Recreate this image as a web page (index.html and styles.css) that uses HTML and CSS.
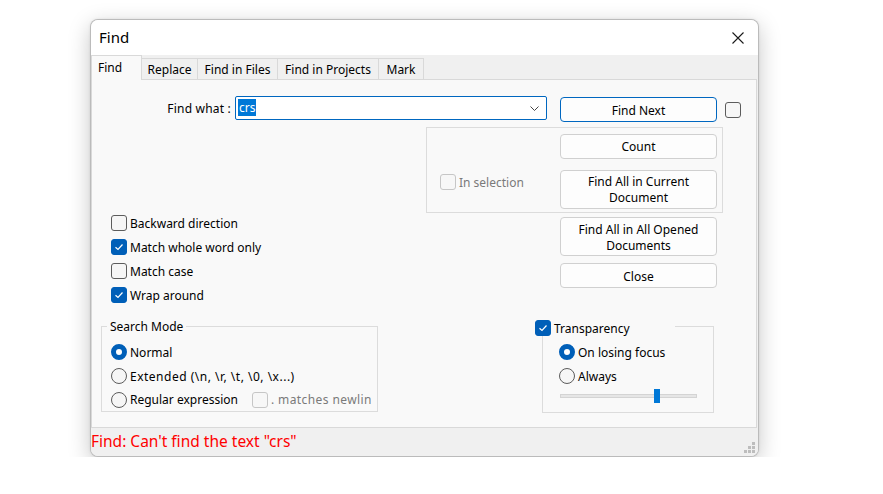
FILE: index.html
```html
<!DOCTYPE html>
<html>
<head>
<meta charset="utf-8">
<link rel="stylesheet" href="styles.css">
</head>
<body>
<div class="window">
  <div class="titlebar">
    <span class="title">Find</span>
    <svg class="close" width="12" height="12" viewBox="0 0 12 12"><path d="M0.5 0.5 L11.5 11.5 M11.5 0.5 L0.5 11.5" stroke="#1a1a1a" stroke-width="1.1" fill="none"/></svg>
  </div>
  <div class="tabs">
    <div class="tab active t-find">Find</div>
    <div class="tab t-replace">Replace</div>
    <div class="tab t-files">Find in Files</div>
    <div class="tab t-projects">Find in Projects</div>
    <div class="tab t-mark">Mark</div>
  </div>
  <div class="panel">
    <div class="row-find">
      <span class="find-label">Find what :</span>
      <div class="combo">
        <span class="sel">crs</span>
        <svg class="chev" width="9" height="5" viewBox="0 0 9 5"><path d="M0.5 0.5 L4.5 4.5 L8.5 0.5" stroke="#444" stroke-width="1" fill="none"/></svg>
      </div>
      <div class="btn default">Find Next</div>
      <span class="cb top-cb"></span>
    </div>
    <div class="mid">
      <div class="options">
        <div class="opt"><span class="cb"></span>Backward direction</div>
        <div class="opt"><span class="cb on"></span>Match whole word only</div>
        <div class="opt"><span class="cb"></span>Match case</div>
        <div class="opt"><span class="cb on"></span>Wrap around</div>
      </div>
      <div class="actions">
        <div class="selbox">
          <div class="insel opt disabled"><span class="cb dis"></span>In selection</div>
          <div class="btncol upper">
            <div class="btn">Count</div>
            <div class="btn tall">Find All in Current<br>Document</div>
          </div>
        </div>
        <div class="btncol lower">
          <div class="btn tall">Find All in All Opened<br>Documents</div>
          <div class="btn">Close</div>
        </div>
      </div>
    </div>
    <div class="groups">
      <fieldset class="mode">
        <legend><span class="lg-text">Search Mode</span></legend>
        <div class="opt"><span class="rb on"></span>Normal</div>
        <div class="opt"><span class="rb"></span><span class="ext">Extended (\n, \r, \t, \0, \x...)</span></div>
        <div class="opt"><span class="rb"></span>Regular expression<span class="newline disabled"><span class="cb dis"></span><span class="nl-text">. matches newline</span></span></div>
      </fieldset>
      <fieldset class="trans">
        <legend><span class="cb on"></span><span class="lg-text">Transparency</span></legend>
        <div class="opt"><span class="rb on"></span>On losing focus</div>
        <div class="opt"><span class="rb"></span>Always</div>
        <div class="slider"><div class="track"></div><div class="thumb"></div></div>
      </fieldset>
    </div>
  </div>
  <div class="status">Find: Can't find the text "crs"</div>
  <svg class="grip" width="12" height="12" viewBox="0 0 12 12">
    <rect x="8" y="0" width="3" height="3" fill="#bdbdbd"/>
    <rect x="4" y="4" width="3" height="3" fill="#bdbdbd"/>
    <rect x="8" y="4" width="3" height="3" fill="#bdbdbd"/>
    <rect x="0" y="8" width="3" height="3" fill="#bdbdbd"/>
    <rect x="4" y="8" width="3" height="3" fill="#bdbdbd"/>
    <rect x="8" y="8" width="3" height="3" fill="#bdbdbd"/>
  </svg>
</div>
</body>
</html>
```
FILE: styles.css
```css
* { box-sizing: border-box; }
html, body { margin: 0; padding: 0; background: #ffffff; }
body {
  font-family: "Noto Sans", "Open Sans", sans-serif;
  font-size: 12px;
  color: #000;
  padding: 19px 0 0 90px;
}
.window {
  position: relative;
  width: 669px;
  height: 438px;
  border: 1px solid rgba(0,0,0,0.22);
  border-radius: 8px;
  overflow: hidden;
  background: #f0f0f0;
  box-shadow: 0 6px 22px rgba(0,0,0,0.22), 0 0 3px rgba(0,0,0,0.08);
  display: flex;
  flex-direction: column;
}
.titlebar {
  height: 35px;
  background: #ffffff;
  display: flex;
  align-items: center;
  justify-content: space-between;
  padding: 0 14px 0 8px;
}
.title { font-size: 15px; line-height: 20px; margin-top: -1px; }
.close { display: block; margin-top: 1px; }

.tabs {
  height: 24px;
  display: flex;
  align-items: flex-end;
  padding-left: 0;
}
.tab {
  height: 21px;
  line-height: 21px;
  border: 1px solid #d9d9d9;
  border-bottom: none;
  margin-right: -1px;
  background: #f0f0f0;
  padding: 0 5px;
  text-align: center;
  white-space: nowrap;
}
.tab.active {
  position: relative;
  z-index: 2;
  height: 25px;
  margin-bottom: -1px;
  background: #f9f9f9;
  line-height: 24px;
  text-align: left;
  padding: 0 6px;
}
.t-find { width: 51px; }
.t-replace { width: 57px; }
.t-files { width: 81px; }
.t-projects { width: 102px; }
.t-mark { width: 46px; }

.panel {
  height: 349px;
  margin-right: 1px;
  background: #f9f9f9;
  border: 1px solid #d9d9d9;
  padding-top: 16px;
}
.row-find {
  display: flex;
  align-items: flex-start;
  height: 26px;
}
.find-label {
  width: 139px;
  text-align: right;
  margin-right: 4px;
  line-height: 26px;
  letter-spacing: 0.2px;
}
.combo {
  width: 312px;
  height: 24px;
  background: #fff;
  border: 1px solid #0067c0;
  border-radius: 2px;
  display: flex;
  align-items: center;
  justify-content: space-between;
  padding: 0 7px 0 2px;
}
.sel {
  background: #0078d7;
  color: #fff;
  line-height: 17px;
  padding: 0 1px;
  margin-top: -2px;
}
.chev { display: block; }
.btn {
  width: 157px;
  height: 25px;
  background: #fdfdfd;
  border: 1px solid #d0d0d0;
  border-radius: 4px;
  text-align: center;
  line-height: 23px;
}
.btn.default { border-color: #0067c0; margin: 1px 0 0 13px; line-height: 25px; }
.btn.tall { height: 39px; line-height: 16px; padding-top: 3px; }
.lower .btn { line-height: 25px; }
.lower .btn.tall { line-height: 16px; padding-top: 4px; }

.cb {
  display: inline-block;
  flex: none;
  width: 16px;
  height: 16px;
  border: 1px solid #5c5c5c;
  border-radius: 3px;
  background: #f6f6f6;
  margin-right: 3px;
}
.cb.on {
  background: #005fb8 url("data:image/svg+xml;utf8,<svg xmlns='http://www.w3.org/2000/svg' width='14' height='14' viewBox='0 0 14 14'><path d='M3.5 7.2 L6 9.5 L10.5 4.5' stroke='white' stroke-width='1.2' fill='none'/></svg>") center/14px 14px no-repeat;
  border-color: #005fb8;
}
.cb.dis { border-color: #c6c6c6; background: #f7f7f7; }
.top-cb { margin: 6px 0 0 8px; }

.rb {
  display: inline-block;
  flex: none;
  width: 16px;
  height: 16px;
  border: 1px solid #5c5c5c;
  border-radius: 50%;
  background: #f6f6f6;
  margin-right: 3px;
}
.rb.on { background: #fff; border: 5px solid #005fb8; }

.opt {
  display: flex;
  align-items: center;
  height: 24px;
  white-space: nowrap;
}
.ext { letter-spacing: 0.5px; }
.disabled { color: #7a7a7a; }

.mid { display: flex; margin-top: 5px; }
.options { width: 334px; padding: 84px 0 0 19px; }
.actions { display: flex; flex-direction: column; }
.selbox {
  width: 297px;
  height: 86px;
  border: 1px solid #dcdcdc;
  display: flex;
}
.insel { width: 133px; padding-left: 13px; margin-top: 42px; }
.btncol { display: flex; flex-direction: column; }
.upper { padding-top: 6px; gap: 11px; }
.lower { margin: 4px 0 0 134px; gap: 7px; }

.groups { display: flex; margin-top: 11px; align-items: flex-start; }
fieldset {
  margin: 0;
  border: 1px solid #dcdcdc;
  min-inline-size: 0;
}
legend { line-height: 16px; height: 16px; }
.mode { width: 277px; margin-left: 9px; padding: 6px 0 0 9px; }
.mode legend { padding: 0 3px; margin-left: -4px; }
.mode .lg-text { display: block; margin-top: 1px; }
.mode .opt:last-child { height: 23px; }
.newline {
  display: flex;
  align-items: center;
  width: 119px;
  overflow: hidden;
  margin-left: 14px;
}
.nl-text { letter-spacing: 0.4px; }
.trans { width: 172px; margin-left: 164px; padding: 6px 0 8px 16px; }
.trans legend {
  display: flex;
  align-items: flex-start;
  width: 140px;
  margin-left: -24px;
  padding: 0;
}
.trans legend .cb { margin-top: 2px; }
.trans legend .lg-text { margin-top: 3px; }
.slider { position: relative; width: 137px; height: 16px; margin-left: 1px; }
.track {
  position: absolute;
  left: 0; right: 0; top: 6px;
  height: 4px;
  background: #e6e6e6;
  border: 1px solid #d4d4d4;
}
.thumb {
  position: absolute;
  left: 94px; top: 1px;
  width: 6px; height: 14px;
  background: #0078d7;
}

.status {
  flex: 1;
  background: #f0f0f0;
  color: #ff0000;
  font-size: 15.5px;
  line-height: 24px;
  padding-top: 1px;
  white-space: nowrap;
}
.grip { position: absolute; right: 2px; bottom: 2px; }
```
